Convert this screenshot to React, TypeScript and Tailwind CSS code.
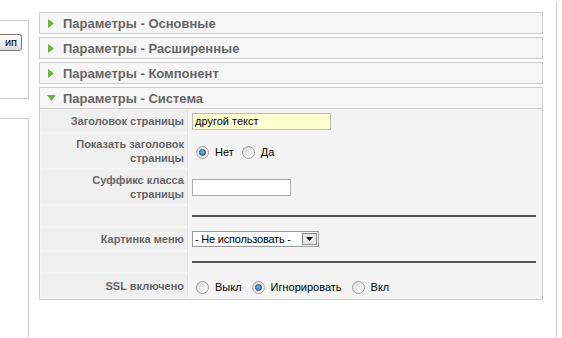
import React from "react";

const font = { fontFamily: '"Liberation Sans", Arial, sans-serif' };

function Radio({ checked }: { checked?: boolean }) {
  return (
    <span className="inline-flex items-center justify-center w-[13px] h-[13px] rounded-full border border-[#a0a0a0] bg-gradient-to-br from-[#d8d8d8] to-[#ffffff] shrink-0">
      {checked ? (
        <span className="w-[7px] h-[7px] rounded-full bg-[radial-gradient(circle_at_40%_35%,#7fc4f4,#1a5f9c)] border border-[#184f7e]" />
      ) : null}
    </span>
  );
}

function Header({ title }: { title: string }) {
  return (
    <div className="h-[22px] flex items-center bg-[#f6f6f6] border border-[#cccccc] pl-[7px]">
      <svg width="6" height="9" viewBox="0 0 6 9" className="ml-[1px] mr-[9px]">
        <polygon points="0,0 6,4.5 0,9" fill="#6cb33e" />
      </svg>
      <span className="text-[13px] font-bold text-[#666666] leading-none">{title}</span>
    </div>
  );
}

function Row({ label, h, children }: { label?: React.ReactNode; h: string; children?: React.ReactNode }) {
  return (
    <div className={`flex ${h}`}>
      <div className="w-[147px] shrink-0 bg-[#f0f0f0] border-r border-[#e4e4e4] flex items-center justify-end pr-[3px] text-right text-[11px] font-bold text-[#666666] leading-[14px]">
        {label}
      </div>
      <div className="flex-1 flex items-center pl-[4px] pr-[5px]">{children}</div>
    </div>
  );
}

export default function App() {
  return (
    <div className="w-[562px] h-[338px] bg-white flex overflow-hidden" style={font}>
      <div className="w-[29px] shrink-0 flex flex-col">
        <div className="mt-[20px] h-[79px] border-t border-r border-b border-[#cccccc] pt-[13px]">
          <div className="-ml-[12px] w-[34px] h-[17px] border border-[#777777] rounded-[3px] bg-gradient-to-b from-[#ffffff] to-[#dedede] text-[11px] text-black flex items-center justify-end pr-[4px] leading-none">
            ип
          </div>
        </div>
        <div className="mt-[19px] flex-1 border-t border-r border-[#cccccc]" />
      </div>
      <div className="ml-[10px] w-[504px] shrink-0 pt-[12px] flex flex-col gap-[3px]">
        <Header title="Параметры - Основные" />
        <Header title="Параметры - Расширенные" />
        <Header title="Параметры - Компонент" />
        <div className="border border-[#cccccc] bg-[#f4f4f4]">
          <div className="h-[21px] flex items-center pl-[7px] border-b border-[#cccccc] bg-[#f6f6f6]">
            <svg width="9" height="6" viewBox="0 0 9 6" className="mr-[7px]">
              <polygon points="0,0 9,0 4.5,6" fill="#6cb33e" />
            </svg>
            <span className="text-[13px] font-bold text-[#666666] leading-none">Параметры - Система</span>
          </div>
          <div className="px-[1px] pt-[1px] pb-[2px] flex flex-col gap-[2px] bg-[#f4f4f4]">
            <Row label="Заголовок страницы" h="h-[22px]">
              <div className="w-[139px] h-[17px] border border-[#bbbbbb] bg-[#ffffd0] text-[11px] text-black flex items-center pl-[2px] leading-none">
                другой текст
              </div>
            </Row>
            <Row
              label={
                <span>
                  Показать заголовок
                  <br />
                  страницы
                </span>
              }
              h="h-[34px]"
            >
              <div className="flex items-center text-[11px] text-black ml-[4px] mt-[2px]">
                <Radio checked />
                <span className="ml-[6px] mr-[8px]">Нет</span>
                <Radio />
                <span className="ml-[6px]">Да</span>
              </div>
            </Row>
            <Row
              label={
                <span>
                  Суффикс класса
                  <br />
                  страницы
                </span>
              }
              h="h-[34px]"
            >
              <div className="w-[99px] h-[17px] border border-[#aaaaaa] bg-white" />
            </Row>
            <Row h="h-[20px]">
              <div className="w-full h-[2px] bg-[#555555]" />
            </Row>
            <Row label="Картинка меню" h="h-[22px]">
              <div className="w-[127px] h-[16px] border border-[#999999] bg-white flex items-center text-[11px] text-black leading-none">
                <span className="flex-1 pl-[2px] tracking-[-0.2px]">- Не использовать -</span>
                <span className="w-[15px] h-[12px] mr-[1px] border border-[#888888] bg-[#e8e8e8] flex items-center justify-center">
                  <svg width="7" height="4" viewBox="0 0 7 4">
                    <polygon points="0,0 7,0 3.5,4" fill="#000" />
                  </svg>
                </span>
              </div>
            </Row>
            <Row h="h-[20px]">
              <div className="w-full h-[2px] bg-[#555555]" />
            </Row>
            <Row label="SSL включено" h="h-[23px]">
              <div className="flex items-center text-[11px] text-black ml-[4px] mt-[3px]">
                <Radio />
                <span className="ml-[6px] mr-[10px]">Выкл</span>
                <Radio checked />
                <span className="ml-[6px] mr-[10px]">Игнорировать</span>
                <Radio />
                <span className="ml-[6px]">Вкл</span>
              </div>
            </Row>
          </div>
        </div>
      </div>
      <div className="ml-[13px] mt-[2px] w-[1px] bg-[#cccccc]" />
    </div>
  );
}
